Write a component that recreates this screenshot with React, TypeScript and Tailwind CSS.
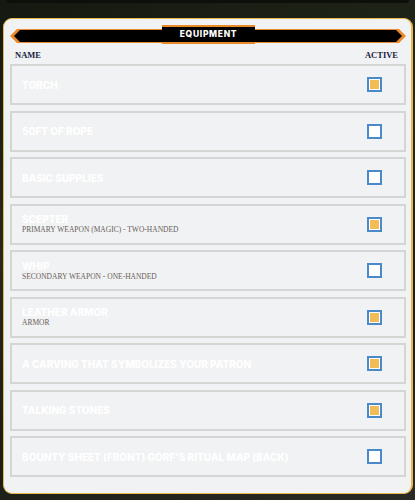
import { type FC } from 'react'

type Item = {
  name: string
  sub?: string
  active: boolean
}

const items: Item[] = [
  { name: 'Torch', active: true },
  { name: '50ft of Rope', active: false },
  { name: 'Basic Supplies', active: false },
  { name: 'Scepter', sub: 'Primary Weapon (Magic) - Two-Handed', active: true },
  { name: 'Whip', sub: 'Secondary Weapon - One-Handed', active: false },
  { name: 'Leather Armor', sub: 'Armor', active: true },
  { name: 'A carving that symbolizes your patron', active: true },
  { name: 'Talking Stones', active: true },
  { name: "Bounty Sheet (Front) Gorf's Ritual Map (Back)", active: false },
]

const sans = { fontFamily: 'Inter, "Open Sans", sans-serif' }
const serif = { fontFamily: '"Liberation Serif", "DejaVu Serif", serif' }

const Check: FC<{ on: boolean }> = ({ on }) => (
  <div className="w-[15px] h-[15px] border-2 border-[#4a8acb] bg-white p-[1px] shrink-0">
    {on && <div className="w-full h-full bg-[#f2bc57]" />}
  </div>
)

const Banner: FC = () => (
  <div className="relative h-[18px]">
    {/* orange outline with pointed ends */}
    <div className="absolute left-0 right-0 top-[3px] h-[14px] bg-[#e8892a] [clip-path:polygon(0_50%,7px_0,calc(100%-7px)_0,100%_50%,calc(100%-7px)_100%,7px_100%)]" />
    <div className="absolute left-[4px] right-[4px] top-[4px] h-[12px] bg-black [clip-path:polygon(0_50%,6px_0,calc(100%-6px)_0,100%_50%,calc(100%-6px)_100%,6px_100%)]" />
    {/* center tab */}
    <div className="absolute left-[152px] w-[93px] -top-[1px] h-[19px] bg-black border-y-2 border-[#e8892a] flex items-center justify-center">
      <span className="text-white text-[8.5px] font-extrabold tracking-[0.08em]" style={sans}>EQUIPMENT</span>
    </div>
  </div>
)

const App: FC = () => (
  <div className="w-[415px] h-[500px] overflow-hidden bg-[linear-gradient(160deg,#141810_0%,#252a1c_40%,#1a1e16_70%,#2b2a24_100%)] pt-[4px]">
    <div className="h-[3px] -mt-[4px] mx-[6px] rounded-b-md bg-[#0d0f0b]" />
    <div className="mt-[15px] ml-[3px] mr-[2px] h-[476px] rounded-[9px] bg-[#f1f2f3] border border-[#e9b84a] border-r-2 pt-[7px] pl-[6px] pr-[5px]">
      <Banner />
      <div className="flex justify-between items-center px-[5px] mt-[5px] h-[12px] text-[8.5px] font-bold text-[#1b1d43]" style={serif}>
        <span>NAME</span>
        <span className="mr-[3px]">ACTIVE</span>
      </div>
      <ul className="mt-[3px] flex flex-col gap-[5.5px]">
        {items.map((it) => (
          <li
            key={it.name}
            className="h-[41px] border-2 border-[#d5d6d4] bg-[#f1f2f3] flex items-center justify-between pl-[10px] pr-[22px]"
          >
            <div className="flex flex-col leading-none">
              <span className="text-white text-[10px] font-extrabold uppercase" style={sans}>{it.name}</span>
              {it.sub && (
                <span className="text-[#67615a] text-[7.5px] uppercase mt-[2px]" style={serif}>{it.sub}</span>
              )}
            </div>
            <Check on={it.active} />
          </li>
        ))}
      </ul>
    </div>
  </div>
)

export default App
